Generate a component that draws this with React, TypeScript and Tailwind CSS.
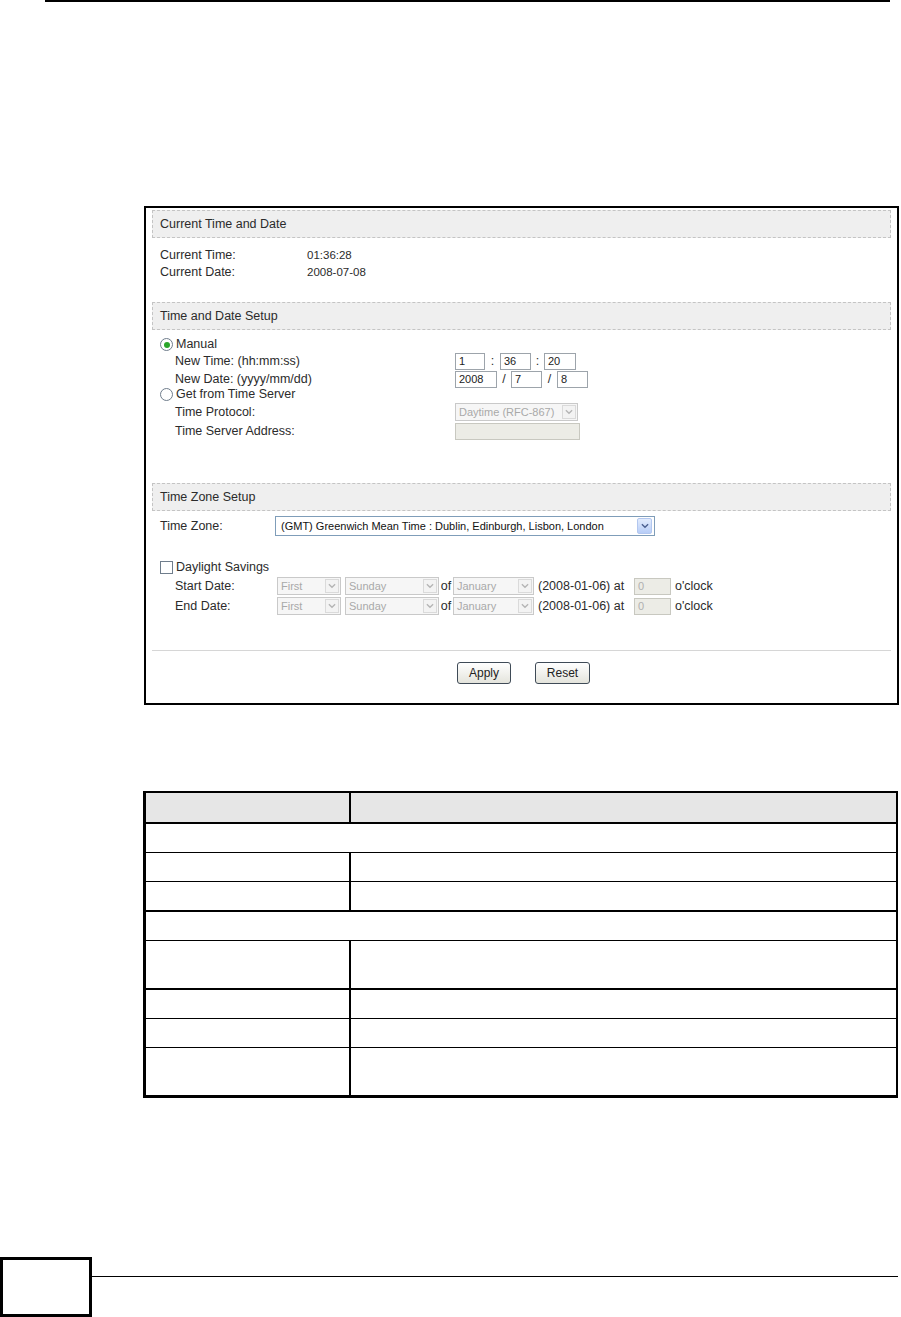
import React from "react";

function Chevron({ color, w = 9 }: { color: string; w?: number }) {
  return (
    <svg width={w} height="6" viewBox="0 0 9 6">
      <path d="M1 1 L4.5 4.5 L8 1" fill="none" stroke={color} strokeWidth="1.5" />
    </svg>
  );
}

function SectionHeader({ children, className = "" }: { children: React.ReactNode; className?: string }) {
  return (
    <div
      className={`flex h-[28px] items-center border border-dashed border-[#c4c4c4] bg-[#efefef] pl-[7px] text-[12.5px] text-[#2b2b2b] ${className}`}
    >
      {children}
    </div>
  );
}

function TextInput({ w, value = "", disabled = false }: { w: string; value?: string; disabled?: boolean }) {
  return (
    <div
      className={`flex h-[17px] items-center border pl-[3px] text-[11px] leading-none ${w} ${
        disabled ? "border-[#c8c8c0] bg-[#ecece6] text-[#b0b0b0]" : "border-[#9da4ab] bg-white text-[#222]"
      }`}
    >
      {value}
    </div>
  );
}

function DisabledSelect({ w, text }: { w: string; text: string }) {
  return (
    <div className={`flex h-[18px] items-center border border-[#c9c9c9] bg-[#f6f6f6] ${w}`}>
      <span className="flex-1 truncate pl-[3px] text-[11px] leading-none text-[#a9a9a9]">{text}</span>
      <span className="mr-[1px] flex h-[14px] w-[14px] items-center justify-center border border-[#dadada] bg-[#f3f3f3]">
        <Chevron color="#b4b4b4" w={8} />
      </span>
    </div>
  );
}

function Radio({ checked }: { checked?: boolean }) {
  return (
    <span className="flex h-[13px] w-[13px] items-center justify-center rounded-full border border-[#6f7d8c] bg-white">
      {checked && <span className="h-[6px] w-[6px] rounded-full bg-[#2aa52a]" />}
    </span>
  );
}

function Button({ children, w }: { children: React.ReactNode; w: string }) {
  return (
    <div
      className={`flex h-[22px] items-center justify-center rounded-[3px] border border-[#3f4b57] bg-linear-to-b from-white to-[#e4e4dc] text-[12px] text-[#222] ${w}`}
    >
      {children}
    </div>
  );
}

function TableRow({
  split,
  h,
  border,
  header,
}: {
  split: boolean;
  h: string;
  border: string;
  header?: boolean;
}) {
  return (
    <div className={`flex border-black ${h} ${border} ${header ? "bg-[#e6e6e6]" : "bg-white"}`}>
      {split ? (
        <>
          <div className="w-[205px] shrink-0 border-r-2 border-black" />
          <div className="flex-1" />
        </>
      ) : (
        <div className="flex-1" />
      )}
    </div>
  );
}

export default function App() {
  return (
    <div className="relative h-[1317px] w-[901px] overflow-hidden bg-white font-['Liberation_Sans',Arial,sans-serif] text-[12.5px] text-[#2b2b2b]">
      {/* top rule */}
      <div className="ml-[45px] h-[2px] w-[845px] bg-black" />

      {/* screenshot panel */}
      <div className="ml-[144px] mt-[204px] box-border h-[499px] w-[755px] border-2 border-black px-[6px] pt-[2px]">
        <SectionHeader>Current Time and Date</SectionHeader>
        <div className="mt-[9px] pl-[8px]">
          <div className="flex h-[17px] items-center">
            <span className="w-[147px]">Current Time:</span>
            <span className="text-[11.5px]">01:36:28</span>
          </div>
          <div className="flex h-[17px] items-center">
            <span className="w-[147px]">Current Date:</span>
            <span className="text-[11.5px]">2008-07-08</span>
          </div>
        </div>

        <SectionHeader className="mt-[21px]">Time and Date Setup</SectionHeader>
        <div className="pl-[8px]">
          <div className="mt-[6px] flex h-[17px] items-center gap-[3px]">
            <Radio checked />
            <span>Manual</span>
          </div>
          <div className="flex h-[17px] items-center pl-[15px]">
            <span className="w-[280px]">New Time: (hh:mm:ss)</span>
            <TextInput w="w-[30px]" value="1" />
            <span className="w-[15px] text-center">:</span>
            <TextInput w="w-[31px]" value="36" />
            <span className="w-[13px] text-center">:</span>
            <TextInput w="w-[32px]" value="20" />
          </div>
          <div className="mt-[1px] flex h-[16px] items-center pl-[15px]">
            <span className="w-[280px]">New Date: (yyyy/mm/dd)</span>
            <TextInput w="w-[42px]" value="2008" />
            <span className="w-[14px] text-center">/</span>
            <TextInput w="w-[31px]" value="7" />
            <span className="w-[15px] text-center">/</span>
            <TextInput w="w-[31px]" value="8" />
          </div>
          <div className="flex h-[15px] items-center gap-[3px]">
            <Radio />
            <span>Get from Time Server</span>
          </div>
          <div className="mt-[1px] flex h-[18px] items-center pl-[15px]">
            <span className="w-[280px]">Time Protocol:</span>
            <DisabledSelect w="w-[123px]" text="Daytime (RFC-867)" />
          </div>
          <div className="mt-[1px] flex h-[18px] items-center pl-[15px]">
            <span className="w-[280px]">Time Server Address:</span>
            <TextInput w="w-[125px]" disabled />
          </div>
        </div>

        <SectionHeader className="mt-[43px]">Time Zone Setup</SectionHeader>
        <div className="pl-[8px]">
          <div className="mt-[4px] flex h-[22px] items-center">
            <span className="w-[115px]">Time Zone:</span>
            <div className="flex h-[20px] w-[380px] items-center border border-[#7f9db9] bg-white">
              <span className="flex-1 pl-[5px] text-[11px] leading-none text-[#111]">
                (GMT) Greenwich Mean Time : Dublin, Edinburgh, Lisbon, London
              </span>
              <span className="mr-[2px] flex h-[16px] w-[15px] items-center justify-center rounded-[2px] border border-[#b3c7ef] bg-linear-to-b from-[#e3ecfd] to-[#b7cdf7]">
                <Chevron color="#4b5f8f" w={8} />
              </span>
            </div>
          </div>
          <div className="mt-[21px] flex h-[18px] items-center gap-[3px]">
            <span className="h-[13px] w-[13px] border border-[#6f7d8c] bg-white" />
            <span>Daylight Savings</span>
          </div>
          {["Start Date:", "End Date:"].map((label) => (
            <div key={label} className="flex h-[20px] items-center pl-[15px]">
              <span className="w-[102px]">{label}</span>
              <DisabledSelect w="w-[64px]" text="First" />
              <span className="w-[4px]" />
              <DisabledSelect w="w-[94px]" text="Sunday" />
              <span className="w-[14px] text-center">of</span>
              <DisabledSelect w="w-[81px]" text="January" />
              <span className="ml-[4px] w-[96px]">(2008-01-06) at</span>
              <TextInput w="w-[37px]" value="0" disabled />
              <span className="ml-[4px]">o'clock</span>
            </div>
          ))}
        </div>

        <div className="mt-[34px] h-px bg-[#d6d6d6]" />
        <div className="mt-[11px] flex items-center">
          <div className="w-[305px]" />
          <Button w="w-[54px]">Apply</Button>
          <div className="w-[24px]" />
          <Button w="w-[55px]">Reset</Button>
        </div>
      </div>

      {/* description table */}
      <div className="ml-[143px] mt-[86px] w-[755px] border-b-[3px] border-l-[3px] border-r-2 border-t-2 border-black">
        <TableRow split header h="h-[31px]" border="border-b-2" />
        <TableRow split={false} h="h-[29px]" border="border-b" />
        <TableRow split h="h-[29px]" border="border-b" />
        <TableRow split h="h-[30px]" border="border-b-2" />
        <TableRow split={false} h="h-[29px]" border="border-b" />
        <TableRow split h="h-[49px]" border="border-b-2" />
        <TableRow split h="h-[29px]" border="border-b" />
        <TableRow split h="h-[29px]" border="border-b" />
        <TableRow split h="h-[47px]" border="" />
      </div>

      {/* footer */}
      <div className="mt-[159px] flex">
        <div className="box-border h-[60px] w-[92px] shrink-0 border-[3px] border-black" />
        <div className="mr-[3px] mt-[19px] h-px flex-1 bg-black" />
      </div>
    </div>
  );
}
